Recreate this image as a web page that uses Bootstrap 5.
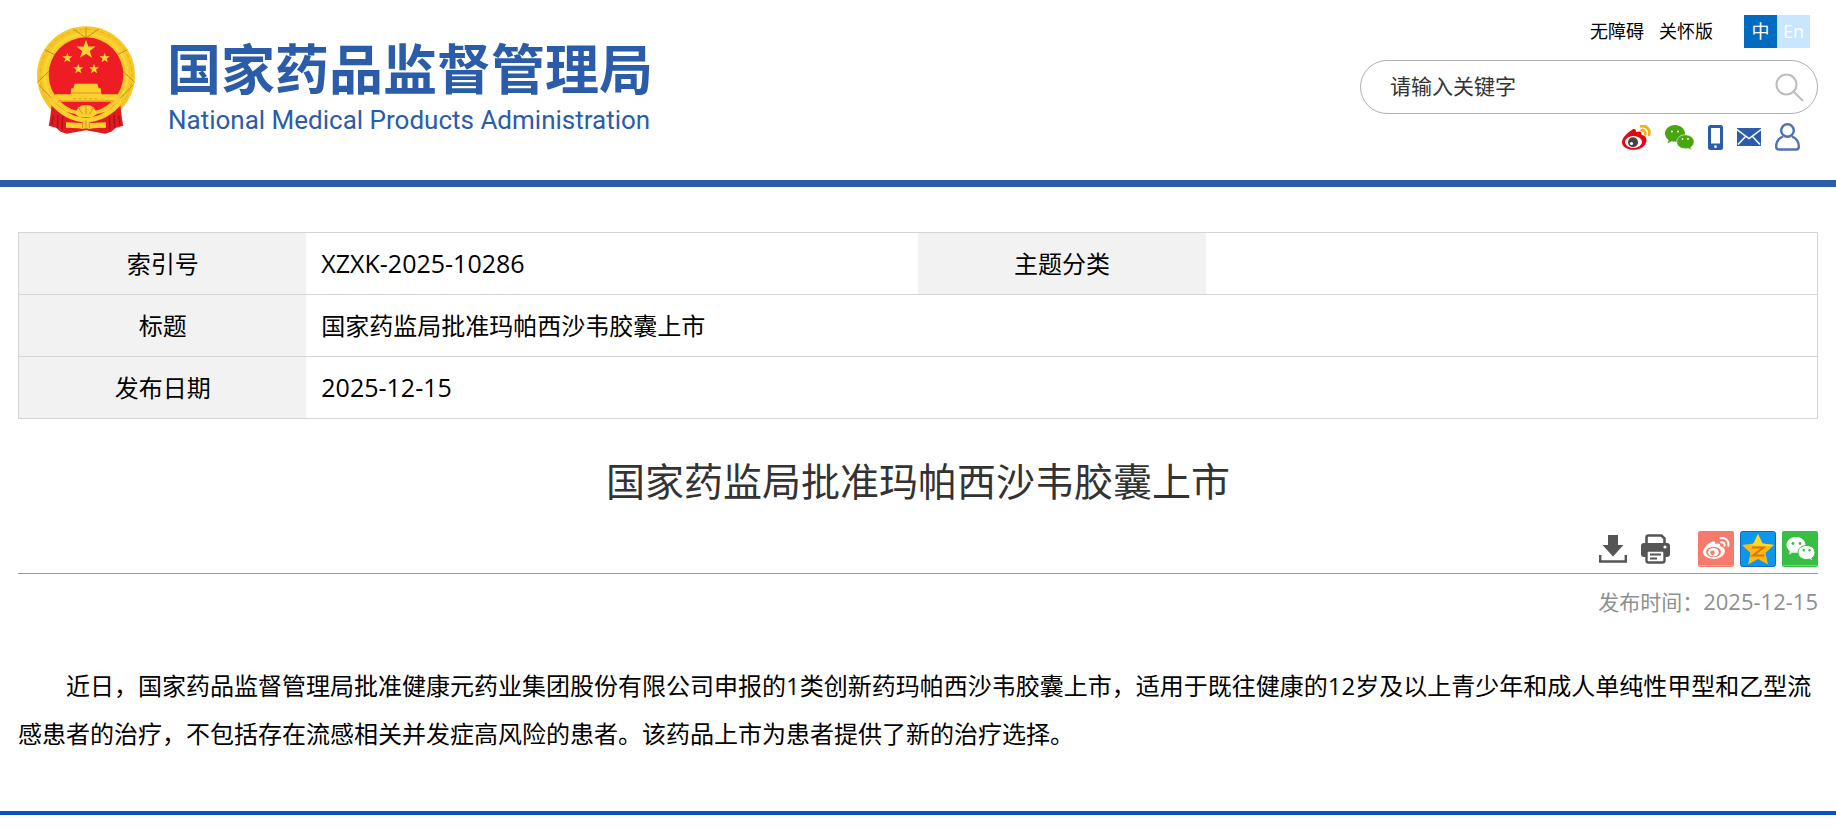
<!DOCTYPE html>
<html lang="zh-CN">
<head>
<meta charset="utf-8">
<meta name="viewport" content="width=device-width, initial-scale=1">
<title>国家药监局批准玛帕西沙韦胶囊上市</title>
<link href="https://cdn.jsdelivr.net/npm/bootstrap@5.3.0/dist/css/bootstrap.min.css" rel="stylesheet">
<style>
  body { font-family: "Open Sans", "Noto Sans CJK SC", sans-serif; color: #000; background: #fff; }
  .site-head { border-bottom: 7px solid #2a5caa; padding: 15px 18px 29px; }
  .brand { color: #2a5caa; gap: 31px; padding: 10px 0 0 18px; }
  .brand:hover { color: #2a5caa; }
  .brand-cn { font: 700 54px/76px "Noto Sans CJK SC", sans-serif; }
  .brand-en { font: 400 26px/30px Roboto, "Liberation Sans", sans-serif; padding-left: 1px; }
  .tools { width: 458px; }
  .top-links { font-size: 18px; line-height: 33px; gap: 15px; padding-right: 8px; }
  .top-links a { color: #000; }
  .lang { margin-left: 16px; }
  .lang .btn { width: 33px; height: 33px; padding: 0; border: 0; border-radius: 0; color: #fff; font-size: 18px; line-height: 33px; }
  .lang-cn { background: #006bbf; }
  .lang-en { background: #c8e6ff; }
  .search { height: 54px; border: 1px solid #b0b0b0; margin-top: 12px; padding: 0 13px 0 29px; }
  .search .form-control { font-size: 21px; color: #333; box-shadow: none; }
  .search .form-control::placeholder { color: #333; opacity: 1; }
  .search .btn { line-height: 0; }
  .socials { height: 28px; margin-top: 9px; padding-right: 18px; gap: 14px; }
  .socials a, .acts a, .acts .btn { line-height: 0; }
  .page { padding: 45px 18px 0; }
  .meta-table { border: 1px solid #d5d5d5; font-size: 24px; line-height: 36px; table-layout: fixed; }
  .meta-table tr { height: 62px; border-bottom: 1px solid #d5d5d5; }
  .meta-table th { width: 16%; background: #f2f2f2; font-weight: 400; text-align: center; }
  .meta-table td { padding: 0 15px; }
  .meta-table .digits { font-size: 25px; padding-bottom: 2px; }
  .headline { font-size: 39px; line-height: 60px; color: #333; margin: 32px 0 20px; }
  .acts { border-bottom: 1px solid #999; padding-bottom: 6px; gap: 14px; }
  .shares { gap: 6px; padding-left: 14px; }
  .stamp { font-size: 21px; line-height: 30px; color: #8f8f8f; margin-top: 12px; }
  .stamp time { font-size: 22px; }
  .article-text { font-size: 24px; line-height: 48px; text-indent: 2em; margin: 45px 0 53px; }
  .foot-line { height: 4px; background: #0b50c4; }
</style>
</head>
<body>
<svg class="d-none" aria-hidden="true">
  <symbol id="star" viewBox="-10 -10 20 20"><path d="M0-10 2.4-3.2 9.5-3.1 3.8 1.3 5.9 8.1 0 4-5.9 8.1-3.8 1.3-9.5-3.1-2.4-3.2Z"/></symbol>
</svg>
<header class="site-head d-flex justify-content-between align-items-start">
  <a href="#" class="brand d-flex align-items-start text-decoration-none">
    <svg width="100" height="110" viewBox="110 74 300 330" role="img" aria-label="国徽">
      <circle cx="260" cy="225" r="147" fill="#f6c928"/>
      <circle cx="260" cy="225" r="138" fill="none" stroke="#e6b022" stroke-width="3" stroke-dasharray="14 7"/>
      <circle cx="260" cy="225" r="124" fill="none" stroke="#f9d638" stroke-width="8"/>
      <path d="M260 80v32M222 86l34 24M298 86l-34 24M136 148l28 14M384 148l-28 14M114 246l38-36M406 246l-38-36M120 255l38 40M400 255l-38 40" stroke="#c98f17" stroke-width="3" fill="none"/>
      <circle cx="260" cy="223" r="112" fill="#ee1c24"/>
      <path d="M158 300q-4 50-10 76l22 6 14 12 18 6 58-10 58 10 18-6 14-12 22-6q-6-26-10-76l-42 34-60 16-60-16Z" fill="#e01b22"/>
      <path d="M162 345l-4 30M176 344l-2 38M190 348l-2 40M358 345l4 30M344 344l2 38M330 348l2 40" stroke="#a91218" stroke-width="4"/>
      <path d="M160 300q50 52 100 52t100-52l12 6q-50 60-112 60T148 306Z" fill="#fcd02f"/>
      <path d="M226 250h68l4 14h6l2 18h48l2 22H164l2-22h48l2-18h6Z" fill="#fcd02f"/>
      <path d="M214 278h92M176 302h168" stroke="#d9941b" stroke-width="3"/>
      <path d="M222 295h76" stroke="#df9d19" stroke-width="3" stroke-dasharray="7 9"/>
      <path d="M228 342q4-28 32-28t32 28l-12 8h-40Z" fill="#fcd02f"/>
      <path d="M260 342v-26M250 342l-12-20M270 342l12-20" stroke="#da981a" stroke-width="3"/>
      <path d="M200 366l46 2q14-14 28 0l46-2v16l-38 2-12 2-10-2-10 2-12-2-38-2Z" fill="#fcd02f"/>
      <path d="M250 364v20M260 360v26M270 364v20" stroke="#d39018" stroke-width="3"/>
      <g fill="#fcd530"><use href="#star" x="230" y="118" width="60" height="60"/><use href="#star" x="188" y="157" width="32" height="32"/><use href="#star" x="300" y="157" width="32" height="32"/><use href="#star" x="221" y="190" width="32" height="32"/><use href="#star" x="268" y="190" width="32" height="32"/></g>
    </svg>
    <span class="d-flex flex-column pt-1">
      <span class="brand-cn">国家药品监督管理局</span>
      <span class="brand-en">National Medical Products Administration</span>
    </span>
  </a>
  <div class="tools">
    <div class="top-links d-flex justify-content-end">
      <a href="#" class="text-decoration-none">无障碍</a>
      <a href="#" class="text-decoration-none">关怀版</a>
      <div class="lang d-flex"><a href="#" class="btn lang-cn">中</a><a href="#" class="btn lang-en">En</a></div>
    </div>
    <form class="search rounded-pill d-flex align-items-center">
      <input type="text" class="form-control border-0 bg-transparent p-0" placeholder="请输入关键字" aria-label="请输入关键字">
      <button type="button" class="btn border-0 p-0" aria-label="搜索">
        <svg width="29" height="29" viewBox="0 0 29 29" fill="none" stroke="#bdbdbd" stroke-width="2"><circle cx="11.500" cy="11.500" r="10"/><path d="M18.500 18.500 28 28"/></svg>
      </button>
    </form>
    <div class="socials d-flex justify-content-end align-items-center">
      <a href="#" aria-label="微博"><svg width="29" height="25" viewBox="0 0 29 25"><path d="M10.500 4.500c2-1.200 4 0 3.400 2.600 3-1.200 6.300-.8 5.600 2.700 3 .8 5 2.200 5 5.400 0 5-5.500 9.600-13 9.600C5 24.800 0 21.700 0 17 0 12.400 6 7.500 10.500 4.500Z" fill="#e30613"/><ellipse cx="11.500" cy="17" rx="8.500" ry="6" fill="#fff"/><circle cx="11" cy="17.300" r="5" fill="#444"/><circle cx="9.500" cy="18.500" r="1.600" fill="#fff"/><path d="M19 1.300c5-1.300 9.500 3 8 8.500M19.500 5.300c2.500-.4 4.200 1.300 3.700 4" fill="none" stroke="#eeb211" stroke-width="2.800" stroke-linecap="round"/></svg></a>
      <a href="#" aria-label="微信"><svg width="29" height="25" viewBox="0 0 29 25"><path d="M10 0C4.500 0 0 3.700 0 8.400c0 2.700 1.500 5 3.600 6.500L2.700 18.300l4-2c1 .3 2.200.5 3.500.5C15.700 16.800 20 13 20 8.400S15.500 0 10 0Z" fill="#47a611"/><path d="M20.300 9.800c-4.900 0-8.600 3.100-8.600 7s3.700 7 8.600 7c1 0 2-.1 2.900-.4l3.300 1.600-.7-2.700c1.900-1.300 3.200-3.200 3.200-5.500 0-3.900-3.900-7-8.700-7Z" fill="#47a611" stroke="#fff" stroke-width=".6"/><g fill="#fff"><circle cx="7" cy="6.500" r="1"/><circle cx="13" cy="6.500" r="1"/><circle cx="17.500" cy="14" r=".9"/><circle cx="23" cy="14" r=".9"/></g></svg></a>
      <a href="#" aria-label="手机版"><svg width="15" height="25" viewBox="0 0 15 25"><rect width="15" height="25" rx="2.500" fill="#2a5caa"/><path d="M3 3h9v15.500H3z" fill="#fff"/><circle cx="7.500" cy="21.700" r="1.400" fill="#fff"/></svg></a>
      <a href="#" aria-label="邮箱"><svg width="24" height="18" viewBox="0 0 24 18"><path d="M0 0h24v18H0z" fill="#2a5caa"/><path d="m0 1.500 12 9 12-9M1 16.500l7.500-8M23 16.500l-7.500-8" fill="none" stroke="#fff" stroke-width="1.500"/></svg></a>
      <a href="#" aria-label="个人中心"><svg width="25" height="28" viewBox="0 0 25 28" fill="none" stroke="#5270b5" stroke-width="2.400"><circle cx="12.500" cy="7.500" r="6.300"/><path d="M8 13.500c-4.500 1.800-6.800 5.800-6.800 10.200 0 2 1.200 2.800 3 2.800h16.600c1.800 0 3-.8 3-2.800 0-4.400-2.300-8.400-6.800-10.200"/></svg></a>
    </div>
  </div>
</header>

<main class="page">
  <table class="meta-table w-100">
    <tbody>
      <tr><th scope="row">索引号</th><td class="digits">XZXK-2025-10286</td><th scope="row">主题分类</th><td></td></tr>
      <tr><th scope="row">标题</th><td colspan="3">国家药监局批准玛帕西沙韦胶囊上市</td></tr>
      <tr><th scope="row">发布日期</th><td colspan="3" class="digits">2025-12-15</td></tr>
    </tbody>
  </table>

  <h1 class="headline text-center fw-normal">国家药监局批准玛帕西沙韦胶囊上市</h1>

  <div class="acts d-flex justify-content-end align-items-center">
    <a href="#" aria-label="下载"><svg width="28" height="28" viewBox="0 0 28 28"><path d="M9 0h10v10h5.500L14 21.500 3.500 10H9Z" fill="#555"/><path d="M1.200 20v6.500h25.600V20" fill="none" stroke="#555" stroke-width="2.400"/></svg></a>
    <button type="button" class="btn border-0 p-0" aria-label="打印"><svg width="29" height="30" viewBox="0 0 29 30"><path d="M5.500 9V3.500q0-2 2-2h13l3 3V9" fill="none" stroke="#555" stroke-width="2.600"/><rect y="9" width="29" height="14" rx="3" fill="#555"/><circle cx="24" cy="13" r="1.600" fill="#fff"/><rect x="5.500" y="16.500" width="18" height="12" rx="2" fill="#fff" stroke="#555" stroke-width="2.400"/><path d="M9 20.500h11M9 24.500h7" stroke="#555" stroke-width="2"/></svg></button>
    <div class="shares d-flex">
      <a href="#" aria-label="分享到微博"><svg width="36" height="36" viewBox="0 0 36 36"><rect width="36" height="36" rx="2" fill="#f67b6c"/><path d="M1 34.500h34" stroke="#fba79c"/><path d="M14.500 10.500c2-.8 3.300.3 2.700 2.500 2.800-1 5.600-.6 5 2.300 3 .7 4.700 2.200 4.700 4.700 0 4.400-4.700 7.900-11 7.900-6 0-10.800-2.500-10.800-6.800 0-4 5-9 9.400-10.600Z" fill="#fff"/><ellipse cx="15.500" cy="21" rx="7.500" ry="5.200" fill="#f67b6c"/><ellipse cx="15.300" cy="21.200" rx="5.400" ry="4.300" fill="#fff"/><circle cx="14.500" cy="21.700" r="2.200" fill="#f67b6c"/><path d="M22.500 7.300c5-1 8.800 2.500 7.800 7.600M23 11.200c2.500-.3 4 1.300 3.500 3.600" fill="none" stroke="#fff" stroke-width="2" stroke-linecap="round"/></svg></a>
      <a href="#" aria-label="分享到QQ空间"><svg width="36" height="36" viewBox="0 0 36 36"><rect x=".5" y=".5" width="35" height="35" rx="2" fill="#0c96ec" stroke="#1166bd"/><path d="M18 3 22.500 12.500l11.500 1.500-8.500 8 2.500 11.500L18 28 8 33.500 10.500 22 2 14l11.500-1.500Z" fill="#fdb813"/><path d="M18 3 22.500 12.500l11.500 1.500-8.500 2-15-2 3-1.500Z" fill="#ffd91f"/><path d="M12 16.500h11.500L13 24.500h11.500" fill="none" stroke="#d87508" stroke-width="2"/></svg></a>
      <a href="#" aria-label="分享到微信"><svg width="36" height="36" viewBox="0 0 36 36"><rect width="36" height="36" rx="2" fill="#38bd45"/><path d="M1 34.500h34" stroke="#77d77f"/><path d="M14 6C8.700 6 4.500 9.500 4.500 13.900c0 2.500 1.300 4.600 3.300 6.100L7 23.500l4-2c1 .2 2 .3 3 .3 5.300 0 9.500-3.500 9.500-7.900S19.300 6 14 6Z" fill="#fff"/><path d="M24.500 14.500c-4.800 0-8.500 3-8.500 7s3.700 7 8.500 7c1 0 2-.1 2.800-.4l3.300 1.900-.7-3c2-1.300 3.100-3.200 3.100-5.500 0-4-3.700-7-8.500-7Z" fill="#fff" stroke="#38bd45"/><g fill="#38bd45"><circle cx="11" cy="12.500" r="1.400"/><circle cx="18" cy="12.500" r="1.400"/><circle cx="21.800" cy="19.300" r="1.200"/><circle cx="27.500" cy="19.300" r="1.200"/></g></svg></a>
    </div>
  </div>
  <div class="stamp text-end">发布时间：<time datetime="2025-12-15">2025-12-15</time></div>

  <p class="article-text">近日，国家药品监督管理局批准健康元药业集团股份有限公司申报的1类创新药玛帕西沙韦胶囊上市，适用于既往健康的12岁及以上青少年和成人单纯性甲型和乙型流感患者的治疗，不包括存在流感相关并发症高风险的患者。该药品上市为患者提供了新的治疗选择。</p>
</main>
<footer class="foot-line"></footer>
<script src="https://cdn.jsdelivr.net/npm/bootstrap@5.3.0/dist/js/bootstrap.bundle.min.js"></script>
</body>
</html>
